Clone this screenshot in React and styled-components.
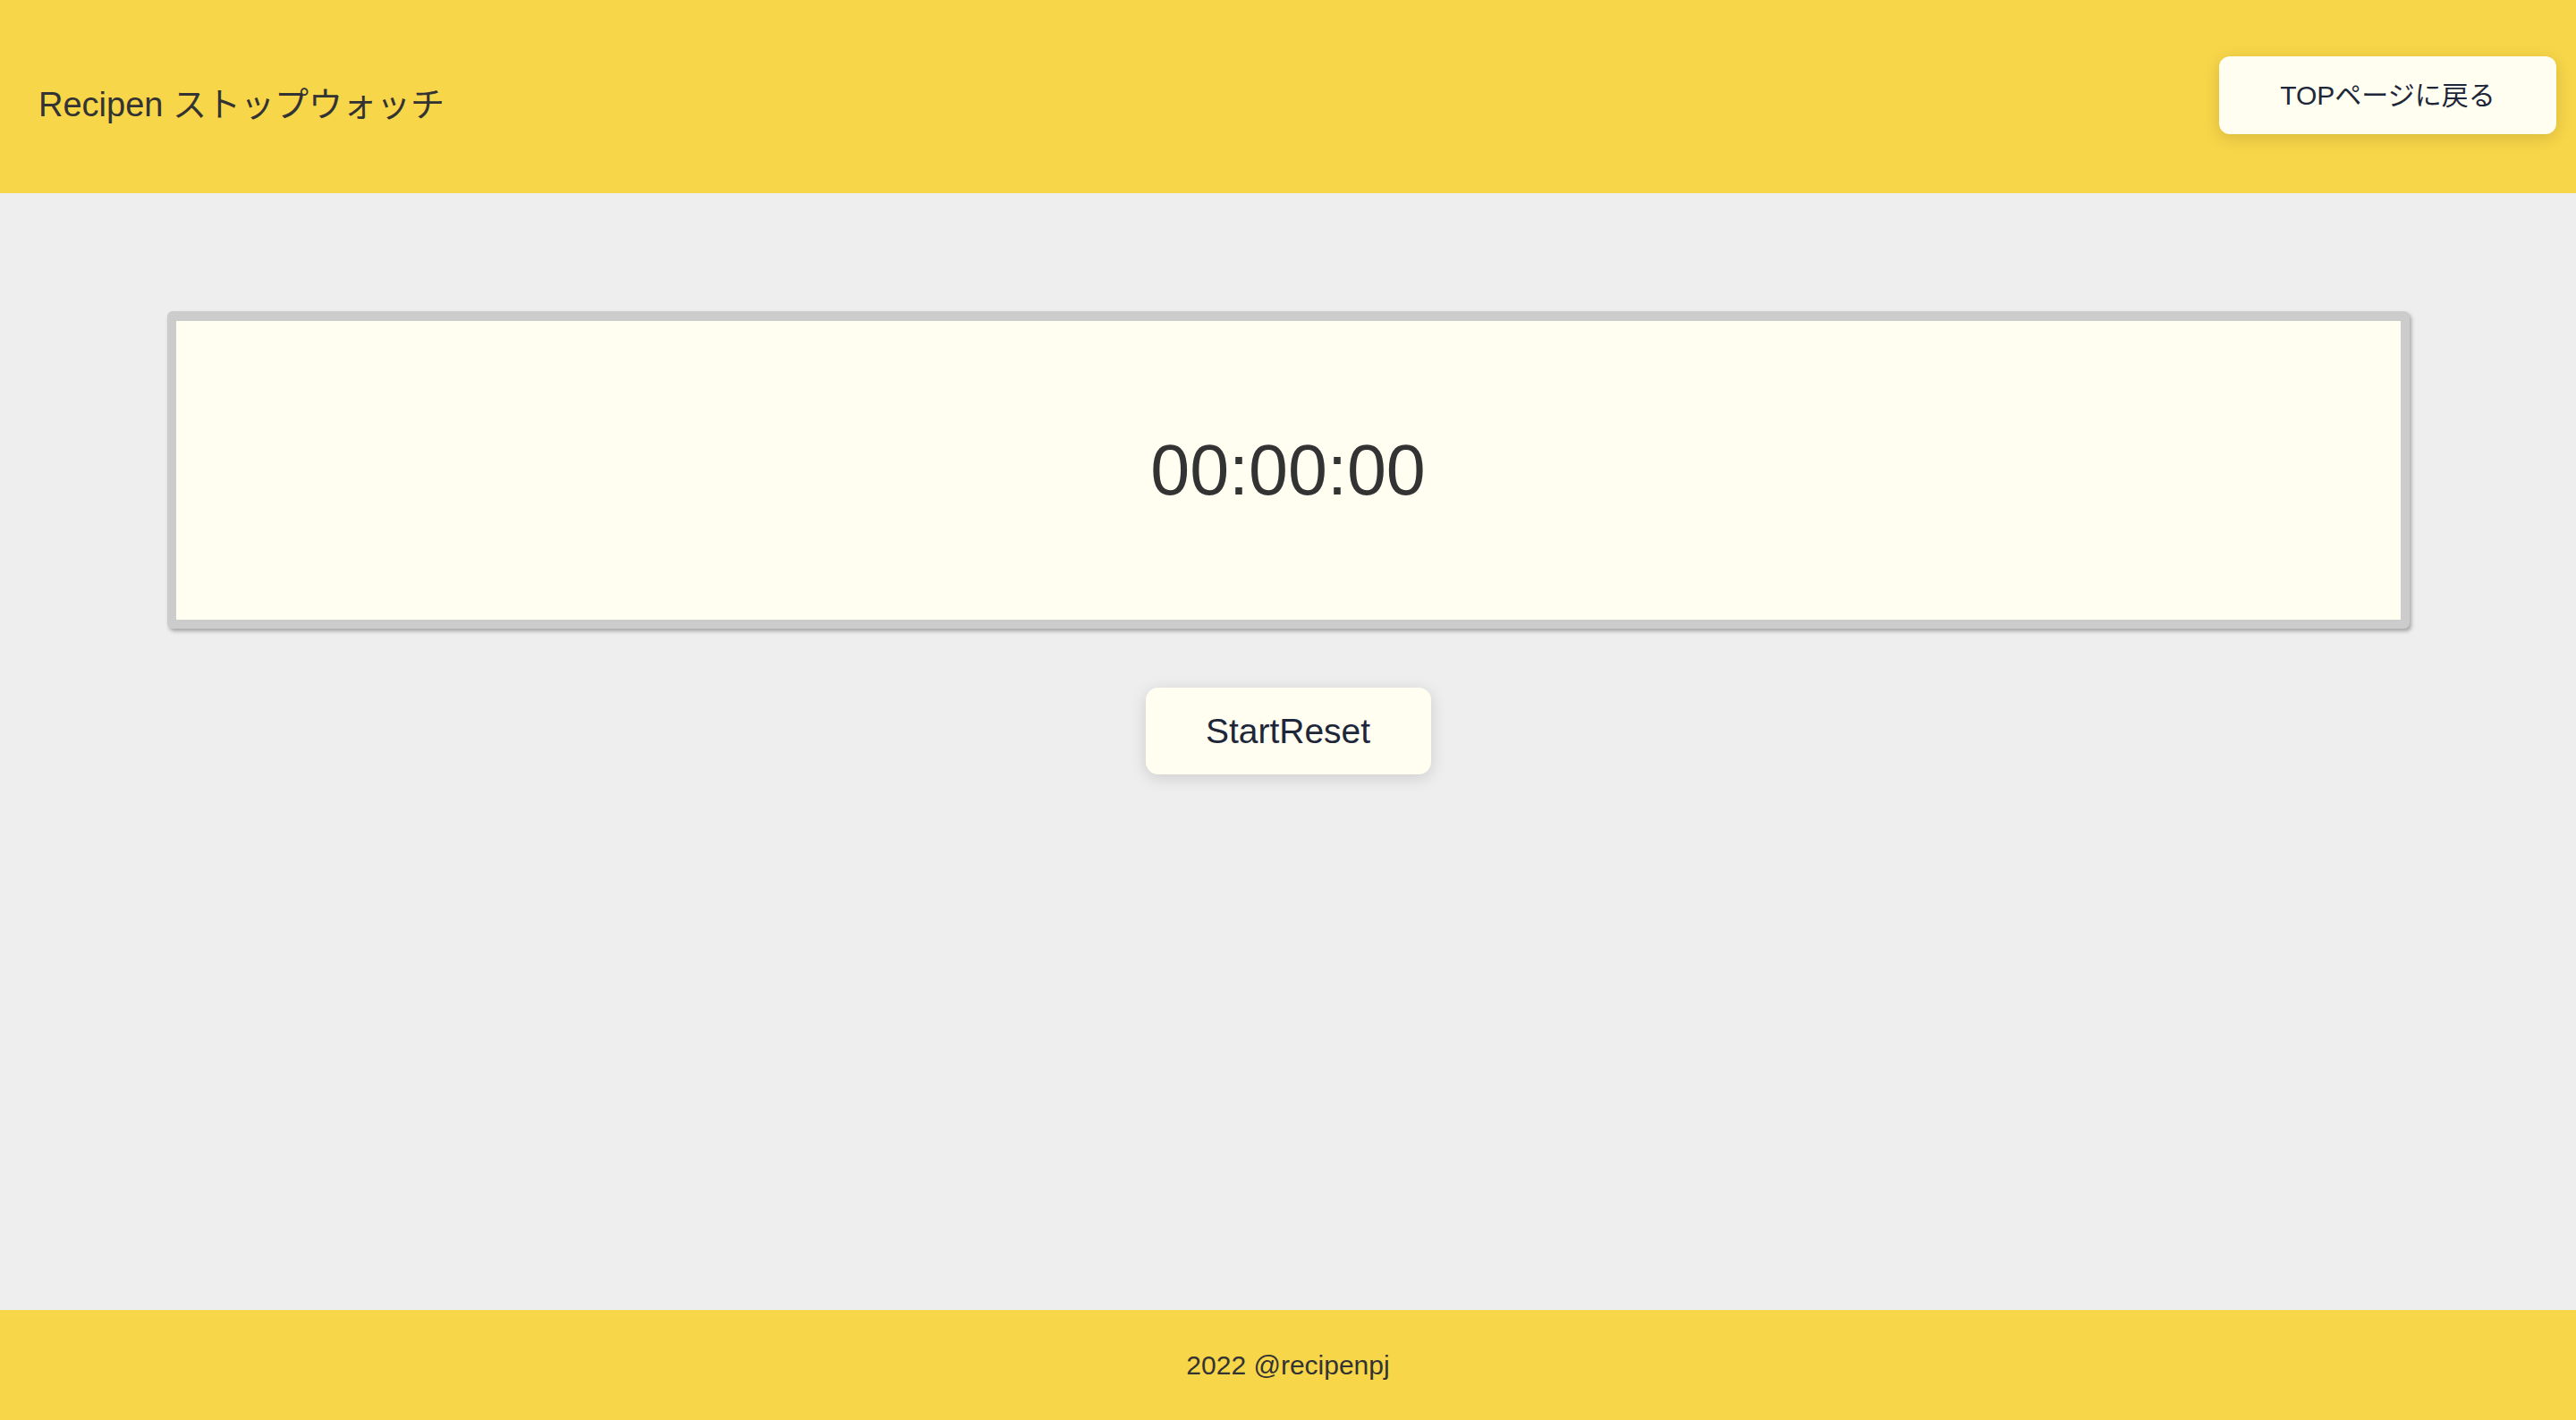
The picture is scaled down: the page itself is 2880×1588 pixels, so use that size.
import React from "react";
import styled, { createGlobalStyle } from "styled-components";

const GlobalStyle = createGlobalStyle`
	html, body {
		margin: 0;
		padding: 0;
		height: 100%;
	}
	body {
		font-family: "Liberation Sans", "Noto Sans CJK JP", sans-serif;
		background: #eeeeee;
	}
	#root {
		height: 100%;
	}
`;

const Page = styled.div`
	display: flex;
	flex-direction: column;
	min-height: 1588px;
	background: #eeeeee;
`;

const Header = styled.header`
	display: flex;
	align-items: center;
	justify-content: space-between;
	height: 216px;
	padding: 0 22px 4px 43px;
	box-sizing: border-box;
	background: #f8d649;
`;

const Title = styled.h1`
	margin: 15px 0 0;
	font-size: 38px;
	font-weight: normal;
	color: #333333;
`;

const PillButton = styled.button`
	display: inline-flex;
	align-items: center;
	justify-content: center;
	width: ${(props) => props.width}px;
	height: ${(props) => props.height}px;
	padding: 0 0 ${(props) => props.lift || 0}px;
	border: none;
	border-radius: ${(props) => props.radius}px;
	background: #fffef1;
	color: #1e2639;
	font-family: "Liberation Sans", "Noto Sans CJK JP", sans-serif;
	font-size: ${(props) => props.size}px;
	box-shadow: 0 4px 18px rgba(0, 0, 0, 0.14);
	cursor: pointer;
`;

const Main = styled.main`
	flex: 1;
	display: flex;
	flex-direction: column;
	align-items: center;
	padding-top: 132px;
	gap: 66px;
`;

const TimerBox = styled.div`
	display: flex;
	align-items: center;
	justify-content: center;
	width: 2507px;
	height: 355px;
	box-sizing: border-box;
	border: 10px solid #cccccc;
	border-top-width: 11px;
	border-radius: 6px;
	background: #fffef1;
	box-shadow: 2px 3px 4px rgba(0, 0, 0, 0.3);
`;

const TimeText = styled.span`
	font-size: 79px;
	color: #333333;
`;

const Footer = styled.footer`
	display: flex;
	align-items: center;
	justify-content: center;
	height: 123px;
	background: #f8d649;
	font-size: 30px;
	color: #333333;
`;

export default function App() {
	return (
		<Page>
			<GlobalStyle />
			<Header>
				<Title>Recipen ストップウォッチ</Title>
				<PillButton width={377} height={87} radius={12} size={30} lift={5}>
					TOPページに戻る
				</PillButton>
			</Header>
			<Main>
				<TimerBox>
					<TimeText>00:00:00</TimeText>
				</TimerBox>
				<PillButton width={319} height={97} radius={14} size={39}>
					StartReset
				</PillButton>
			</Main>
			<Footer>2022 @recipenpj</Footer>
		</Page>
	);
}
